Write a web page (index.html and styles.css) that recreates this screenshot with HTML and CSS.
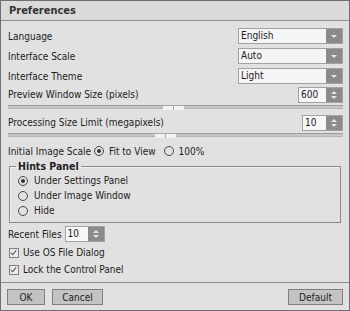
FILE: index.html
```html
<!DOCTYPE html>
<html lang="en">
<head>
  <meta charset="UTF-8" />
  <title>Preferences</title>
  <link rel="stylesheet" href="styles.css">
</head>
<body>
  <div class="window">
    <div class="title">Preferences</div>

    <div class="content">
      <div class="row">
        <span>Language</span>
        <div class="select"><span class="value">English</span><span class="drop"></span></div>
      </div>
      <div class="row">
        <span>Interface Scale</span>
        <div class="select"><span class="value">Auto</span><span class="drop"></span></div>
      </div>
      <div class="row">
        <span>Interface Theme</span>
        <div class="select"><span class="value">Light</span><span class="drop"></span></div>
      </div>

      <div class="row spin-row">
        <span>Preview Window Size (pixels)</span>
        <div class="spin wide"><span class="value">600</span><span class="arrows"></span></div>
      </div>
      <div class="slider"><div class="track"><div class="thumb" style="left: 155px"></div></div></div>

      <div class="row spin-row gap">
        <span>Processing Size Limit (megapixels)</span>
        <div class="spin"><span class="value">10</span><span class="arrows"></span></div>
      </div>
      <div class="slider"><div class="track"><div class="thumb" style="left: 147px"></div></div></div>

      <div class="scale-row">
        <span>Initial Image Scale</span>
        <label class="option"><span class="radio on"></span>Fit to View</label>
        <label class="option"><span class="radio"></span>100%</label>
      </div>

      <fieldset class="group">
        <legend>Hints Panel</legend>
        <label class="option item"><span class="radio on"></span>Under Settings Panel</label>
        <label class="option item"><span class="radio"></span>Under Image Window</label>
        <label class="option item"><span class="radio"></span>Hide</label>
      </fieldset>

      <div class="recent-row">
        <span>Recent Files</span>
        <div class="spin small"><span class="value">10</span><span class="arrows"></span></div>
      </div>

      <label class="check-row first"><span class="check"></span>Use OS File Dialog</label>
      <label class="check-row"><span class="check"></span>Lock the Control Panel</label>
    </div>

    <div class="footer">
      <button class="btn ok">OK</button>
      <button class="btn cancel">Cancel</button>
      <button class="btn default">Default</button>
    </div>
  </div>
</body>
</html>
```

FILE: styles.css
```css
body {
  margin: 0;
  font-family: "DejaVu Sans Condensed", "Liberation Sans", sans-serif;
  font-size: 10px;
  color: #1c1c1c;
  background: #e0e0e0;
}

.window {
  width: 350px;
  height: 311px;
  box-sizing: border-box;
  border: 1px solid #6f6f6f;
  background: #e1e1e1;
  display: flex;
  flex-direction: column;
}

.title {
  height: 19px;
  line-height: 19px;
  padding-left: 8px;
  font-size: 11px;
  font-weight: bold;
  color: #333;
  background: #dadada;
  border-bottom: 1px solid #8d8d8d;
}

.content {
  flex: 1;
  padding: 5px 6px 0 7px;
  display: flex;
  flex-direction: column;
}

.row {
  height: 20px;
  display: flex;
  align-items: center;
  justify-content: space-between;
}

.spin-row {
  height: 17px;
}

.spin-row.gap {
  margin-top: 3px;
}

.select {
  width: 105px;
  height: 16px;
  box-sizing: border-box;
  border: 1px solid #a2a2a2;
  background: #f5f5f5;
  display: flex;
}

.value {
  flex: 1;
  padding-left: 2px;
  line-height: 14px;
  color: #1a1a26;
}

.drop {
  width: 16px;
  background: #8b8b8b;
  position: relative;
}

.drop::after {
  content: "";
  position: absolute;
  left: 5px;
  top: 6px;
  border-left: 3px solid transparent;
  border-right: 3px solid transparent;
  border-top: 3px solid #e6e6e6;
}

.spin {
  width: 41px;
  height: 16px;
  box-sizing: border-box;
  border: 1px solid #a2a2a2;
  background: #f7f7f7;
  display: flex;
}

.spin.wide {
  width: 45px;
}

.spin.small {
  width: 40px;
  margin-left: 3px;
}

.arrows {
  width: 16px;
  background: #8b8b8b;
  position: relative;
}

.arrows::before,
.arrows::after {
  content: "";
  position: absolute;
  left: 5px;
  border-left: 3px solid transparent;
  border-right: 3px solid transparent;
}

.arrows::before {
  top: 3px;
  border-bottom: 3px solid #e6e6e6;
}

.arrows::after {
  top: 8px;
  border-top: 3px solid #e6e6e6;
}

.slider {
  height: 8px;
  padding-top: 2px;
  box-sizing: border-box;
}

.track {
  height: 4px;
  box-sizing: border-box;
  border-top: 1px solid #9c9c9c;
  border-bottom: 1px solid #b4b4b4;
  background: #c6c6c6;
  position: relative;
}

.thumb {
  position: absolute;
  top: -1px;
  width: 21px;
  height: 4px;
  background: linear-gradient(to right, #f2f2f2 0, #f2f2f2 10px, #a8a8a8 10px, #a8a8a8 11px, #f2f2f2 11px);
  border-top: 1px solid #a8a8a8;
}

.scale-row {
  height: 18px;
  margin-top: 3px;
  display: flex;
  align-items: center;
}

.option {
  display: flex;
  align-items: center;
}

.scale-row .option:first-of-type {
  margin-left: 3px;
}

.scale-row .option + .option {
  margin-left: 8px;
}

.radio {
  width: 10px;
  height: 10px;
  box-sizing: border-box;
  border: 1px solid #4a4a4a;
  border-radius: 50%;
  margin-right: 5px;
  display: flex;
  align-items: center;
  justify-content: center;
}

.radio.on::after {
  content: "";
  width: 4px;
  height: 4px;
  border-radius: 50%;
  background: #333;
}

.group {
  margin: 0 2px 0 1px;
  padding: 0 7px 4px 8px;
  border: 1px solid #8a8a8a;
  box-shadow: inset 1px 1px 0 #f0f0f0;
}

.group legend {
  padding: 0 2px;
  margin-left: -2px;
  line-height: 13px;
  font-size: 10.5px;
  font-weight: bold;
  color: #222;
}

.item {
  height: 15px;
}

.item .radio {
  margin-right: 6px;
}

.recent-row {
  height: 16px;
  margin-top: 3px;
  display: flex;
  align-items: center;
}

.check-row {
  height: 17px;
  display: flex;
  align-items: center;
  padding-left: 1px;
}

.check-row.first {
  margin-top: 2px;
}

.check {
  width: 10px;
  height: 10px;
  box-sizing: border-box;
  border: 1px solid #7e7e7e;
  background: #ececec;
  margin-right: 4px;
  position: relative;
}

.check::after {
  content: "";
  position: absolute;
  left: 2px;
  top: 0;
  width: 2px;
  height: 5px;
  border-right: 1px solid #555;
  border-bottom: 1px solid #555;
  transform: rotate(40deg);
}

.footer {
  height: 28px;
  box-sizing: border-box;
  border-top: 1px solid #8d8d8d;
  padding: 6px 6px 0 6px;
  display: flex;
  gap: 7px;
}

.btn {
  height: 16px;
  padding: 0;
  font-family: inherit;
  font-size: 10px;
  color: #222;
  background: #c3c3c3;
  border: 1px solid #7f7f7f;
}

.ok {
  width: 38px;
}

.cancel {
  width: 51px;
}

.default {
  width: 55px;
  margin-left: auto;
}
```
